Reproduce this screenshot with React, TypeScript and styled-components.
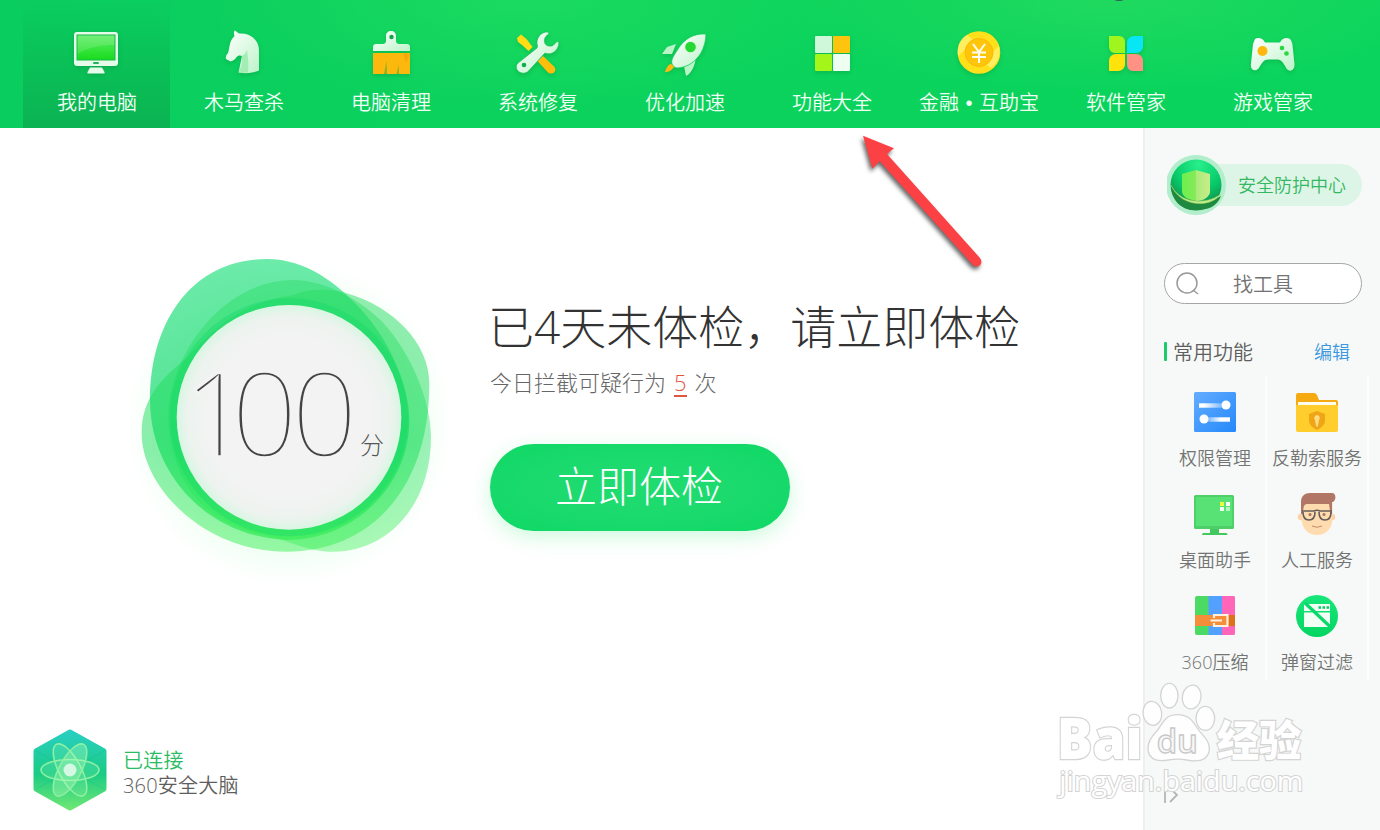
import React from "react";
import styled, { createGlobalStyle } from "styled-components";

const sans = '"Open Sans", "Noto Sans CJK SC", sans-serif';

const GlobalStyle = createGlobalStyle`
  * { box-sizing: border-box; }
  body { margin: 0; background: #fff; font-family: ${sans}; font-weight: 350; }
`;

const Window = styled.div`
  position: relative;
  width: 1380px;
  height: 830px;
  overflow: hidden;
  display: flex;
  flex-direction: column;
  background: #fff;
`;

const Header = styled.header`
  height: 128px;
  flex: none;
  display: flex;
  padding-left: 23px;
  background:
    radial-gradient(ellipse 340px 90px at 1110px 0, rgba(46, 222, 96, 0.6), transparent),
    radial-gradient(ellipse 330px 110px at 530px 0, rgba(34, 222, 98, 0.7), transparent),
    linear-gradient(90deg, #0acd60 0%, #0bd25c 40%, #0ad45d 100%);
`;

const NavItem = styled.a<{ $active?: boolean }>`
  width: 147px;
  height: 128px;
  display: flex;
  flex-direction: column;
  align-items: center;
  padding-top: 28px;
  background: ${(p) => (p.$active ? "linear-gradient(180deg, rgba(10,190,85,0) 0%, rgba(10,190,85,.6) 35%, #0bb352 100%)" : "none")};
`;

const NavIcon = styled.svg`
  width: 50px;
  height: 50px;
  flex: none;
  filter: drop-shadow(0 2px 2px rgba(0, 90, 30, 0.2));
`;

const NavLabel = styled.span`
  margin: 10px 0 0 1px;
  font-family: "Liberation Sans", "Noto Sans CJK SC", sans-serif;
  font-size: 20px;
  line-height: 30px;
  word-spacing: 1px;
  color: #f2fff6;
  white-space: nowrap;
`;

const Body = styled.div`
  flex: 1;
  display: flex;
  min-height: 0;
`;

const Main = styled.main`
  width: 1143px;
  flex: none;
  display: flex;
  flex-direction: column;
  justify-content: space-between;
`;

const Hero = styled.section`
  display: flex;
  padding: 112px 0 0 120px;
`;

const Gauge = styled.svg`
  width: 340px;
  height: 350px;
  flex: none;
`;

const Summary = styled.div`
  margin: 48px 0 0 30px;
  display: flex;
  flex-direction: column;
  align-items: flex-start;
`;

const Title = styled.h1`
  margin: 0 0 0 -2px;
  font-size: 46px;
  font-weight: 300;
  line-height: 76px;
  color: #333;
  white-space: nowrap;
`;

const Sub = styled.p`
  margin: 1px 0 0;
  font-size: 22px;
  font-weight: 300;
  line-height: 34px;
  color: #666;
  white-space: nowrap;
`;

const Count = styled.span`
  display: inline-block;
  margin: 0 8px;
  line-height: 25px;
  color: #e0553d;
  border-bottom: 2px solid #e0553d;
`;

const CheckButton = styled.button`
  margin-top: 45px;
  width: 300px;
  height: 87px;
  padding: 0 2px 4px 0;
  border: 0;
  border-radius: 44px;
  background: radial-gradient(ellipse at center, #20dc70 0%, #1bda6d 50%, #0dd865 100%);
  box-shadow: 0 6px 20px rgba(60, 235, 120, 0.25);
  color: #fff;
  font: 300 42px/60px ${sans};
`;

const Status = styled.footer`
  display: flex;
  align-items: center;
  padding: 0 0 17px 32px;
`;

const BrainIcon = styled.svg`
  width: 76px;
  height: 86px;
`;

const StatusText = styled.div`
  display: flex;
  flex-direction: column;
  margin: 5px 0 0 15px;
  font-size: 20px;
  line-height: 25px;
  letter-spacing: 0.2px;
  color: #5e5e5e;
`;

const Connected = styled.span`
  color: #2abc63;
`;

const Sidebar = styled.aside`
  flex: 1;
  border-left: 2px solid #eeefee;
  background: #f6f9f7;
  display: flex;
  flex-direction: column;
`;

const Protect = styled.div`
  margin: 26px 0 0 22px;
  display: flex;
  align-items: center;
  height: 62px;
`;

const ProtectIcon = styled.svg`
  width: 60px;
  height: 62px;
  z-index: 1;
`;

const ProtectLabel = styled.span`
  margin-left: -30px;
  width: 165px;
  height: 42px;
  padding-left: 41px;
  border-radius: 0 21px 21px 0;
  background: #ddf5e6;
  font-size: 18px;
  line-height: 42px;
  color: #34b85f;
  white-space: nowrap;
`;

const Search = styled.div`
  margin: 47px 0 0 19px;
  width: 198px;
  height: 41px;
  display: flex;
  align-items: center;
  padding-left: 10px;
  border: 1px solid #a6a6a6;
  border-radius: 21px;
  background: #fff;
  font-size: 20px;
  color: #737373;
`;

const SearchIcon = styled.svg`
  width: 25px;
  height: 25px;
  margin-right: 33px;
`;

const SectionHead = styled.div`
  margin: 32px 30px 0 19px;
  height: 30px;
  display: flex;
  align-items: center;
  font-size: 20px;
  color: #5e5e5e;
`;

const Marker = styled.i`
  width: 3px;
  height: 19px;
  margin-right: 6px;
  border-radius: 1px;
  background: #1ccb69;
`;

const Edit = styled.a`
  margin-left: auto;
  font-size: 18px;
  color: #3b97e0;
`;

const Tools = styled.div`
  margin: 9px 0 0 20px;
  display: grid;
  grid-template-columns: 102px 102px;
  grid-auto-rows: 102px;
`;

const Tool = styled.div`
  display: flex;
  flex-direction: column;
  align-items: center;
  padding-top: 15px;
  border-right: 2px solid #fcfdfc;
`;

const ToolIcon = styled.svg`
  width: 46px;
  height: 46px;
  flex: none;
`;

const ToolLabel = styled.span`
  margin: 7px 0 0;
  font-size: 18px;
  line-height: 30px;
  color: #747474;
  white-space: nowrap;
`;

const Expand = styled.svg`
  width: 18px;
  height: 20px;
  margin: 104px 0 0 18px;
`;

const Overlay = styled.svg<{ $x: number; $y: number }>`
  position: absolute;
  left: ${(p) => p.$x}px;
  top: ${(p) => p.$y}px;
  pointer-events: none;
`;

const icons = {
  computer: (
    <>
      <rect x="2" y="4" width="44" height="34" rx="3" fill="#e4fbe9" />
      <rect x="5" y="7" width="38" height="25" fill="url(#screen)" stroke="#17b94a" strokeWidth="1" />
      <path d="M5.5 26C17 19 29 17 42.5 17V7.500H5.5Z" fill="#fff" opacity=".13" />
      <rect x="21" y="34" width="6" height="2" rx="1" fill="#22b65a" />
      <path d="M18 39.500h12l2.500 4.500v1.500h-17V44Z" fill="#e4fbe9" />
    </>
  ),
  horse: (
    <>
      <path d="M15.500 2.500c1.500.5 3.500 2.500 5 3C31 4.500 40 12 40 22v20.500c-6 2.500-14 3.500-20.500 2L23 28c-2-1-4-.5-5.500 1-1 2-3 4-6 4.500L7 31c-.5-2 0-4 2-6 2-6 1-12 6.500-17-.8-2-.8-4 0-5.500Z" fill="url(#white)" />
      <path d="M22.500 28c3-1 4-3 5.500-6 1 8 2 13 1 22.500-3 .5-7 .5-9.500 0 2-4 4.500-9 3-16.500Z" fill="#8eeaa5" opacity=".7" />
    </>
  ),
  brush: (
    <>
      <path d="M25 3c-3 0-5 2-5 5v4c0 3-1 4-4 4h-6c-2 0-3 1-3 3v4h37v-4c0-2-1-3-3-3h-7c-3 0-4-1-4-4V8c0-3-2-5-5-5Z" fill="url(#white)" />
      <circle cx="25.500" cy="9" r="2.200" fill="#13a34c" />
      <path d="M7 25h37v21H7Z" fill="#fdb80e" />
      <path d="m20.500 33-2.500 13h3Zm12 4-2 9h2.500Z" fill="#3fae33" opacity=".6" />
      <path d="m37 25 7 1-4 9Z" fill="#f5a90c" />
    </>
  ),
  repair: (
    <>
      <path d="m4 10 4-3.500 5.500 4.500 6 8-4 4-6.500-6-4-3Z" fill="#ffdc14" />
      <path d="m30 28 11 10.500c4 5-2 9.500-6.500 5.500L24.500 33Z" fill="#ffbe0c" />
      <path d="m24 20 .5-2C22 11 28 3 35 4l1 1.500c-5 4-5 6-4 10 2 3 5 3 8 2l4-4 2 .5c0 9-8 14-14 11L16 42.500c-6 7-17-1-11-7.500Z" fill="url(#white)" stroke="#12bd55" strokeWidth=".7" />
      <circle cx="11" cy="37" r="2.300" fill="#12ae4b" />
    </>
  ),
  rocket: (
    <>
      <path d="m2 26 5-7 9-3-4 10Zm34 3c-1 8-4 16-10 19l-2-10Z" fill="#b9f4c7" />
      <path d="M46 6C34 5 24 11 18 21c-5 8-7 10-6 15 2 3 3 4 6 4 10-1 17-6 23-15 3-6 5-12 5-19Z" fill="url(#white)" stroke="#12cd5b" strokeWidth=".8" />
      <circle cx="30.500" cy="19" r="5.300" fill="#25d934" />
      <path d="M10 36c-3 2-4 5-5 8 4 0 6-1 9-5-1-2-2-3-4-3Z" fill="#ffb913" />
    </>
  ),
  features: (
    <>
      <rect x="8" y="8" width="17" height="17" rx="1" fill="#cef8d9" />
      <rect x="26" y="8" width="17" height="17" rx="1" fill="#ffc40d" />
      <rect x="8" y="26" width="17" height="17" rx="1" fill="#a4f51a" />
      <rect x="26" y="26" width="17" height="17" rx="1" fill="#eefff1" />
    </>
  ),
  coin: (
    <>
      <circle cx="25" cy="24.500" r="21.300" fill="#ffe01b" />
      <path d="M13 7 23 15 12 21 4 28C2 18 7 10 13 7Zm32 11c2 10-2 18-8 22l-9-7 8-6Z" fill="#fff47a" opacity=".7" />
      <circle cx="25" cy="24.500" r="14" fill="#ffc50b" stroke="#ffb70a" strokeWidth="1" />
      <path d="m19 16 6 8 6-8M18 24.500h14M18 29h14M25 24v11" fill="none" stroke="#fffef0" strokeWidth="2" />
    </>
  ),
  software: (
    <>
      <path d="M8 8h10c4 0 6 3 6 6v11H14c-4 0-6-3-6-7Z" fill="#a0f51f" />
      <path d="M42 8v10c0 4-3 7-7 7h-9V15c0-4 3-7 7-7Z" fill="#08e5f4" />
      <path d="M24 26v10c0 4-3 7-7 7H8V33c0-4 3-7 7-7Z" fill="#ffe30b" />
      <path d="M26 26h9c4 0 7 3 7 7v10H32c-4 0-6-3-6-7Z" fill="#ff9285" />
    </>
  ),
  game: (
    <>
      <path d="M7 11c3-2 8-1 10 3.500h15c2-4.500 7-5.500 10-3.500 1.500 2 2 3 2.500 6L46.500 36c.5 7-5 8.500-8 4.500-4-7-5-9-10-9h-8c-5 0-6 3-10 9-4 4-8.500 1-7.500-5L5 16Z" fill="url(#white)" />
      <circle cx="14.500" cy="23" r="5" fill="#ffb80b" />
      <circle cx="34" cy="20" r="2.300" fill="#28d641" />
      <circle cx="38.500" cy="25.500" r="2.300" fill="#28d641" />
    </>
  ),
};

const nav: [keyof typeof icons, string][] = [
  ["computer", "我的电脑"],
  ["horse", "木马查杀"],
  ["brush", "电脑清理"],
  ["repair", "系统修复"],
  ["rocket", "优化加速"],
  ["features", "功能大全"],
  ["coin", "金融 • 互助宝"],
  ["software", "软件管家"],
  ["game", "游戏管家"],
];

const tools: [string, React.ReactNode][] = [
  [
    "权限管理",
    <>
      <rect x="2" y="2" width="42" height="40" rx="1.500" fill="url(#blue)" />
      <path d="M7 13.300h24v4.400H7Z" fill="url(#fadeR)" />
      <path d="M15 27.300h23v4.400H15Z" fill="url(#fadeL)" />
      <circle cx="34" cy="15" r="4.500" fill="#fff" />
      <circle cx="12" cy="29" r="4.500" fill="#fff" />
    </>,
  ],
  [
    "反勒索服务",
    <>
      <path d="M2 5q0-2 2-2h16q2 0 3 2l2 5h17q2 0 2 2v10H2Z" fill="#f5aa12" />
      <path d="M4 12h38v6H4Z" fill="#fffdf0" />
      <path d="M2 15h42v25q0 2-2 2H4q-2 0-2-2Z" fill="#ffcd2c" />
      <path d="m23 21 8 3v6c0 5-3 7-8 10-5-3-8-5-8-10v-6Z" fill="#efa516" />
      <path d="M23 25a3 3 0 0 0-2 5l1 6 1 1 1-1 1-6a3 3 0 0 0-2-5Z" fill="#ffdc81" />
    </>,
  ],
  [
    "桌面助手",
    <>
      <path d="M18 36h9v5h7q1.500 0 1.500 2H10q0-2 1.500-2H18Z" fill="#42c85f" />
      <rect x="2" y="3" width="40" height="34" rx="1.500" fill="#4ecf6a" />
      <rect x="4" y="5" width="36" height="29" fill="#58e276" />
      <path d="M28 10h4v4h-4Z" fill="#eaff3d" />
      <path d="M34 10h4v4h-4ZM28 15h4v4h-4Z" fill="#f3fff4" />
      <path d="M34 15h4v4h-4Z" fill="#b2f7bd" />
    </>,
  ],
  [
    "人工服务",
    <>
      <circle cx="7" cy="25" r="3.200" fill="#ffd1a2" />
      <circle cx="38" cy="25" r="3.200" fill="#ffd1a2" />
      <path d="M7.500 10h31v16c0 10-6 17-15.500 17S7.500 36 7.500 26Z" fill="#ffdcb0" />
      <path d="M7 22V10c0-6 4-9 9-9h22c5 0 4 9 0 9v12h-1.500L35 12H13c-2 0-3 1-3.500 4L8.500 22Z" fill="#b17666" />
      <path d="M8 19h12q3-1.500 6 0h12M9 20q0 8 6 8t6-8M25 20q0 8 6 8t6-8" fill="none" stroke="#655d59" strokeWidth="1.600" />
      <circle cx="16" cy="22.500" r="1.500" fill="#a5745c" />
      <circle cx="30" cy="22.500" r="1.500" fill="#a5745c" />
      <path d="M18 34q5 2.500 10 0" fill="none" stroke="#c68968" />
    </>,
  ],
  [
    "360压缩",
    <>
      <rect x="3" y="2" width="40" height="39" rx="2" fill="#4bdb65" />
      <path d="M16.500 2H30v39H16.500Z" fill="#52a0ff" />
      <path d="M30 2h11q2 0 2 2v35q0 2-2 2H30Z" fill="#ff65b8" />
      <path d="M3 21h40v11H3Z" fill="#f58e3a" />
      <path d="M36 21h7v11h-7Z" fill="#dc721a" />
      <path d="M22 24v-3h13.500v11H22v-3M18.500 26.500H30" fill="none" stroke="#fff1df" strokeWidth="2.200" />
    </>,
  ],
  [
    "弹窗过滤",
    <>
      <circle cx="23" cy="22" r="21" fill="url(#round)" />
      <path d="M10 10h26v7H10ZM10 18.500h26V33H10Z" fill="#f1fff5" />
      <path d="M24.500 13.500h2.500m1.500 0H31m1.500 0H35" stroke="#08c765" strokeWidth="2.500" />
      <path d="m11 9 26 24.500" stroke="#09d86b" strokeWidth="3.200" />
    </>,
  ],
];

function Defs() {
  return (
    <defs>
      <linearGradient id="white" x2="1" y2="1"><stop stopColor="#fff" /><stop offset="1" stopColor="#bdf4c9" /></linearGradient>
      <linearGradient id="screen" x2="0" y2="1"><stop stopColor="#5fee66" /><stop offset="1" stopColor="#17dc1d" /></linearGradient>
      <linearGradient id="blue" x2="1" y2="1"><stop stopColor="#64adff" /><stop offset="1" stopColor="#2588fa" /></linearGradient>
      <linearGradient id="fadeR"><stop offset=".2" stopColor="#fff" /><stop offset="1" stopColor="#fff" stopOpacity=".25" /></linearGradient>
      <linearGradient id="fadeL"><stop stopColor="#fff" stopOpacity=".25" /><stop offset=".6" stopColor="#fff" /></linearGradient>
      <linearGradient id="round" x2="0" y2="1"><stop stopColor="#17e77a" /><stop offset="1" stopColor="#04d562" /></linearGradient>
    </defs>
  );
}

function ScoreGauge() {
  return (
    <Gauge viewBox="0 0 1020 1050">
      <defs>
        <linearGradient id="b1" x2="0" y2="1"><stop stopColor="#20e07d" /><stop offset=".6" stopColor="#08d665" /><stop offset="1" stopColor="#22e84c" /></linearGradient>
        <linearGradient id="b2" x2="0" y2="1"><stop stopColor="#28dc62" /><stop offset=".6" stopColor="#1ade5c" /><stop offset="1" stopColor="#3cf055" /></linearGradient>
        <radialGradient id="face"><stop offset=".7" stopColor="#f3f3f3" /><stop offset=".9" stopColor="#edf3ef" /><stop offset="1" stopColor="#d8f6e2" /></radialGradient>
        <radialGradient id="glow"><stop offset=".7" stopColor="#aeffc0" stopOpacity=".28" /><stop offset="1" stopColor="#d0ffdc" stopOpacity="0" /></radialGradient>
      </defs>
      <circle cx="507" cy="550" r="495" fill="url(#glow)" />
      <path d="M440 57C560 57 650 130 720 205C800 290 868 430 868 540C868 740 700 900 500 900C260 890 90 700 90 480C90 240 220 57 440 57Z" fill="url(#b1)" opacity=".66" />
      <path d="M520 120C620 120 740 190 800 260C870 340 933 480 933 590C933 800 800 935 640 935C560 935 520 905 450 890C250 850 160 740 145 540C140 360 300 120 520 120Z" fill="url(#b2)" opacity=".42" />
      <path d="M520 165C560 145 640 145 680 160C820 200 928 310 928 430C928 760 740 935 500 935C250 935 65 740 65 580C65 470 130 410 210 345C300 240 400 180 520 165Z" fill="url(#b2)" opacity=".5" />
      <circle cx="507" cy="532" r="346" fill="none" stroke="#10d868" strokeWidth="22" opacity=".35" />
      <circle cx="507" cy="532" r="337" fill="url(#face)" />
      <text x="190 333 513" y="652" fontFamily="Open Sans" fontWeight="300" fontSize="352" fill="#444" stroke="#f3f3f3" strokeWidth="10">100</text>
      <text x="720" y="643" fontFamily="Noto Sans CJK SC" fontWeight="300" fontSize="72" fill="#555">分</text>
    </Gauge>
  );
}

export default function App() {
  return (
    <Window>
      <GlobalStyle />
      <Header>
        {nav.map(([icon, label], i) => (
          <NavItem key={icon} $active={i === 0}>
            <NavIcon viewBox="0 0 50 50">
              {i === 0 && <Defs />}
              {icons[icon]}
            </NavIcon>
            <NavLabel>{label}</NavLabel>
          </NavItem>
        ))}
      </Header>
      <Body>
        <Main>
          <Hero>
            <ScoreGauge />
            <Summary>
              <Title>已4天未体检，请立即体检</Title>
              <Sub>今日拦截可疑行为<Count>5</Count>次</Sub>
              <CheckButton>立即体检</CheckButton>
            </Summary>
          </Hero>
          <Status>
            <BrainIcon viewBox="0 0 76 86">
              <defs>
                <linearGradient id="hex" x2="0" y2="1"><stop stopColor="#28cfc0" /><stop offset=".55" stopColor="#1acb84" /><stop offset="1" stopColor="#6be675" /></linearGradient>
              </defs>
              <path d="m38 5 34 19v38L38 81 4 62V24Z" fill="url(#hex)" stroke="url(#hex)" strokeWidth="5" strokeLinejoin="round" />
              <path d="m4 24 34 19 34-19M38 43 4 62m34-19 34 19" fill="none" stroke="#0eb985" opacity=".35" />
              <g fill="#b5ffb8" fillOpacity=".16" stroke="#8cf0a4" strokeWidth="1.600">
                <ellipse cx="38" cy="43" rx="29" ry="10.500" />
                <ellipse cx="38" cy="43" rx="29" ry="11" transform="rotate(62 38 43)" />
                <ellipse cx="38" cy="43" rx="29" ry="11" fillOpacity=".35" transform="rotate(-62 38 43)" />
              </g>
              <circle cx="38" cy="43" r="6.500" fill="#d5f8e2" />
            </BrainIcon>
            <StatusText>
              <Connected>已连接</Connected>
              <span>360安全大脑</span>
            </StatusText>
          </Status>
        </Main>
        <Sidebar>
          <Protect>
            <ProtectIcon viewBox="0 0 60 62">
              <defs>
                <radialGradient id="orb" cx=".55" cy=".1" r=".9"><stop stopColor="#27f08c" /><stop offset=".55" stopColor="#08c968" /><stop offset="1" stopColor="#138047" /></radialGradient>
                <linearGradient id="shield"><stop stopColor="#6cf04e" /><stop offset=".48" stopColor="#86ea58" /><stop offset=".5" stopColor="#aaeb7a" /><stop offset="1" stopColor="#c8ec88" /></linearGradient>
              </defs>
              <circle cx="29" cy="31" r="30" fill="#b2edcc" />
              <circle cx="29" cy="31" r="25.500" fill="url(#orb)" />
              <path d="M4 30c8 20 34 22 50 12-4 11-14 14-24 14C16 57 4 48 4 30Z" fill="#1e8a40" />
              <path d="m29 16 14 4v18c0 4-6 9-13 9-7-1-14-3-15-9V20Z" fill="url(#shield)" />
              <path d="M4 31c8 18 34 21 50 9-10 14-40 14-50-9Z" fill="#c2ec87" stroke="#a8d86a" strokeWidth=".5" />
            </ProtectIcon>
            <ProtectLabel>安全防护中心</ProtectLabel>
          </Protect>
          <Search>
            <SearchIcon viewBox="0 0 25 25" fill="none" stroke="#999" strokeWidth="1.500">
              <circle cx="12" cy="12" r="10" />
              <path d="m18 19 5 4" />
            </SearchIcon>
            找工具
          </Search>
          <SectionHead>
            <Marker />
            常用功能
            <Edit>编辑</Edit>
          </SectionHead>
          <Tools>
            {tools.map(([label, icon]) => (
              <Tool key={label}>
                <ToolIcon viewBox="0 0 46 46">{icon}</ToolIcon>
                <ToolLabel>{label}</ToolLabel>
              </Tool>
            ))}
          </Tools>
          <Expand viewBox="0 0 18 20" fill="none" stroke="#b5b5b5" strokeWidth="1.800">
            <path d="M2 0v2M2 5v13M7 3l7 7-7 7" />
          </Expand>
        </Sidebar>
      </Body>
      <Overlay $x={840} $y={120} width="170" height="170" viewBox="0 0 510 510">
        <path d="m69 47 93 38-21 17 277 310c18 20-8 38-22 20L119 124l-22 22Z" fill="#fc4144" filter="drop-shadow(-5px 9px 6px rgba(0,0,0,.6))" />
      </Overlay>
      <Overlay $x={1108} $y={-8} width="22" height="10" viewBox="0 0 22 10">
        <ellipse cx="11" cy="4" rx="8" ry="5" fill="#315d50" />
      </Overlay>
      <Overlay $x={1040} $y={670} width="300" height="150" viewBox="0 0 900 450" fill="#fff" fillOpacity=".85" stroke="#d4d4d4" strokeWidth="4">
        <ellipse cx="388" cy="77" rx="26" ry="37" />
        <ellipse cx="455" cy="81" rx="28" ry="36" transform="rotate(10 455 81)" />
        <ellipse cx="337" cy="130" rx="28" ry="36" transform="rotate(-8 337 130)" />
        <ellipse cx="496" cy="145" rx="28" ry="36" />
        <path d="M412 134c-40 0-45 30-62 50-20 20-30 38-25 62 8 30 38 28 60 24 20-4 35-4 55 0 30 6 60 4 67-24 5-25-8-40-28-62-16-20-25-50-67-50Z" />
        <text x="50" y="268" fontFamily="Open Sans" fontWeight="800" fontSize="168" textLength="258" lengthAdjust="spacingAndGlyphs" paintOrder="stroke" fillOpacity="1" strokeWidth="7">Bai</text>
        <text x="350" y="250" fontFamily="Open Sans" fontWeight="600" fontSize="98" textLength="124" lengthAdjust="spacingAndGlyphs" fill="#f8f8f8" stroke="#c8c8c8">du</text>
        <text x="530" y="257" fontFamily="Noto Sans CJK SC" fontWeight="900" fontSize="127" paintOrder="stroke" fillOpacity="1" strokeWidth="7">经验</text>
        <text x="58" y="363" fontFamily="Open Sans" fontWeight="500" fontSize="80" textLength="732" lengthAdjust="spacingAndGlyphs" paintOrder="stroke" fillOpacity="1" strokeWidth="6">jingyan.baidu.com</text>
      </Overlay>
    </Window>
  );
}
